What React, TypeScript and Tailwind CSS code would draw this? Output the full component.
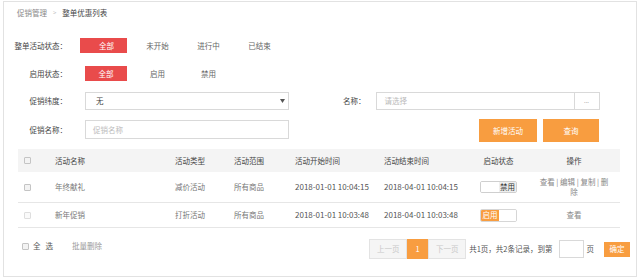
import React from "react";

function Box({ light = false }: { light?: boolean }) {
  return (
    <span
      className={
        "block w-[7px] h-[7px] rounded-[1px] border " +
        (light ? "border-[#dedede] bg-[#fafafa]" : "border-[#c4c4c4] bg-[#f3f3f3]")
      }
    />
  );
}

export default function App() {
  return (
    <div className="w-[640px] h-[279px] bg-white pl-[3px] pt-[1px] [font-family:'Noto_Sans_CJK_SC','Noto_Sans',sans-serif] text-[7.5px] leading-[10px] text-[#555]">
      <div className="w-[634px] h-[276px] border border-[#e2e2e2] flex flex-col">
        {/* breadcrumb */}
        <div className="flex items-center h-[12px] mt-[5px] pl-[13px]">
          <span className="text-[#888]">促销管理</span>
          <span className="mx-[6px] text-[6px] text-[#bbb]">&gt;</span>
          <span className="text-[#444]">整单优惠列表</span>
        </div>

        {/* row 1 */}
        <div className="flex items-center h-[15px] mt-[19px]">
          <div className="w-[63px] text-right text-[#444] shrink-0">整单活动状态：</div>
          <div className="ml-[13px] w-[47px] h-[15px] bg-[#e94b4b] text-white flex items-center justify-center pl-[6px]">全部</div>
          <div className="ml-[5px] flex text-[#666]">
            <span className="w-[51px] text-center">未开始</span>
            <span className="w-[51px] text-center">进行中</span>
            <span className="w-[51px] text-center">已结束</span>
          </div>
        </div>

        {/* row 2 */}
        <div className="flex items-center h-[15px] mt-[13px]">
          <div className="w-[63px] text-right text-[#444] shrink-0">启用状态：</div>
          <div className="ml-[18px] w-[42px] h-[15px] bg-[#e94b4b] text-white flex items-center justify-center">全部</div>
          <div className="ml-[5px] flex text-[#666]">
            <span className="w-[51px] text-center">启用</span>
            <span className="w-[51px] text-center">禁用</span>
          </div>
        </div>

        {/* row 3 */}
        <div className="flex items-center h-[18px] mt-[11px]">
          <div className="w-[63px] text-right text-[#444] shrink-0">促销纬度：</div>
          <div className="ml-[18px] w-[204px] h-[18px] border border-[#d9d9d9] flex items-center pl-[10px] pr-[3px] text-[#444]">
            <span>无</span>
            <svg className="ml-auto" width="5" height="4" viewBox="0 0 5 4">
              <path d="M0 0 L5 0 L2.5 4 Z" fill="#555" />
            </svg>
          </div>
          <div className="ml-[54px] text-[#444]">名称：</div>
          <div className="ml-[10px] flex">
            <div className="w-[199px] h-[18px] border border-[#d9d9d9] flex items-center pl-[8px] text-[#bbb]">请选择</div>
            <div className="w-[25px] h-[18px] border border-l-0 border-[#d9d9d9] flex items-center justify-center text-[#888] text-[6px]">...</div>
          </div>
        </div>

        {/* row 4 */}
        <div className="flex items-start h-[23px] mt-[9px]">
          <div className="w-[63px] h-[21px] flex items-center justify-end text-[#444] shrink-0">促销名称：</div>
          <div className="ml-[18px] mt-[1px] w-[204px] h-[19px] border border-[#d9d9d9] flex items-center pl-[7px] text-[#bbb]">促销名称</div>
          <div className="ml-[190px] w-[58px] h-[23px] bg-[#f89d40] text-white flex items-center justify-center">新增活动</div>
          <div className="ml-[6px] w-[56px] h-[23px] bg-[#f89d40] text-white flex items-center justify-center">查询</div>
        </div>

        {/* table */}
        <div className="ml-[14px] mt-[7px] w-[602px] flex flex-col">
          <div className="grid grid-cols-[27px_120px_59px_61px_89px_91px_67px_88px] h-[23px] items-center bg-[#f4f4f4] text-[#444]">
            <div className="pl-[6px]"><Box /></div>
            <div className="pl-[10px]">活动名称</div>
            <div className="pl-[10px]">活动类型</div>
            <div className="pl-[10px]">活动范围</div>
            <div className="pl-[10px]">活动开始时间</div>
            <div className="pl-[10px]">活动结束时间</div>
            <div className="text-center">启动状态</div>
            <div className="text-center pr-[4px]">操作</div>
          </div>

          <div className="grid grid-cols-[27px_120px_59px_61px_89px_91px_67px_88px] h-[31px] items-center border-b border-[#e6e6e6] text-[#777]">
            <div className="pl-[6px]"><Box /></div>
            <div className="pl-[10px]">年终献礼</div>
            <div className="pl-[10px]">减价活动</div>
            <div className="pl-[10px]">所有商品</div>
            <div className="pl-[10px] text-[8px] text-[#555]">2018-01-01 10:04:15</div>
            <div className="pl-[10px] text-[8px] text-[#555]">2018-04-01 10:04:15</div>
            <div className="flex justify-center">
              <div className="w-[37px] h-[12px] border border-[#cfcfcf] rounded-[2px] flex overflow-hidden">
                <span className="w-[18px] bg-white" />
                <span className="flex-1 bg-[#eeeeee] text-[#333] flex items-center justify-center leading-none">禁用</span>
              </div>
            </div>
            <div className="text-center pr-[4px] text-[#888] leading-[10px]">
              查看 | 编辑 | 复制 | 删
              <br />
              除
            </div>
          </div>

          <div className="grid grid-cols-[27px_120px_59px_61px_89px_91px_67px_88px] h-[25px] items-center border-b border-[#e6e6e6] text-[#777]">
            <div className="pl-[6px]"><Box light /></div>
            <div className="pl-[10px]">新年促销</div>
            <div className="pl-[10px]">打折活动</div>
            <div className="pl-[10px]">所有商品</div>
            <div className="pl-[10px] text-[8px] text-[#555]">2018-01-01 10:03:48</div>
            <div className="pl-[10px] text-[8px] text-[#555]">2018-04-01 10:03:48</div>
            <div className="flex justify-center">
              <div className="w-[37px] h-[13px] border border-[#d6d6d6] rounded-[2px] flex overflow-hidden">
                <span className="w-[18px] bg-[#f89d40] text-white flex items-center justify-center leading-none">启用</span>
                <span className="flex-1 bg-white" />
              </div>
            </div>
            <div className="text-center pr-[4px] text-[#888]">查看</div>
          </div>
        </div>

        {/* footer */}
        <div className="flex items-start justify-between">
          <div className="flex items-center h-[10px] mt-[13px] ml-[18px]">
            <Box />
            <span className="ml-[4px] text-[#555]">全</span>
            <span className="ml-[5px] text-[#555]">选</span>
            <span className="ml-[19px] text-[#999]">批量删除</span>
          </div>
          <div className="flex items-center mt-[11px] mr-[6px]">
            <div className="w-[38px] h-[20px] border border-[#e3e3e3] bg-[#f5f5f5] text-[#c8c8c8] flex items-center justify-center">上一页</div>
            <div className="w-[21px] h-[20px] bg-[#f89d40] text-white flex items-center justify-center">1</div>
            <div className="w-[38px] h-[20px] border border-[#e3e3e3] bg-[#f5f5f5] text-[#c8c8c8] flex items-center justify-center">下一页</div>
            <span className="ml-[3px] text-[#555]">共1页，共2条记录，到第</span>
            <div className="ml-[6px] w-[25px] h-[18px] border border-[#d9d9d9] bg-white" />
            <span className="ml-[3px] text-[#555]">页</span>
            <div className="ml-[10px] w-[26px] h-[15px] bg-[#f89d40] text-white flex items-center justify-center">确定</div>
          </div>
        </div>
      </div>
    </div>
  );
}
